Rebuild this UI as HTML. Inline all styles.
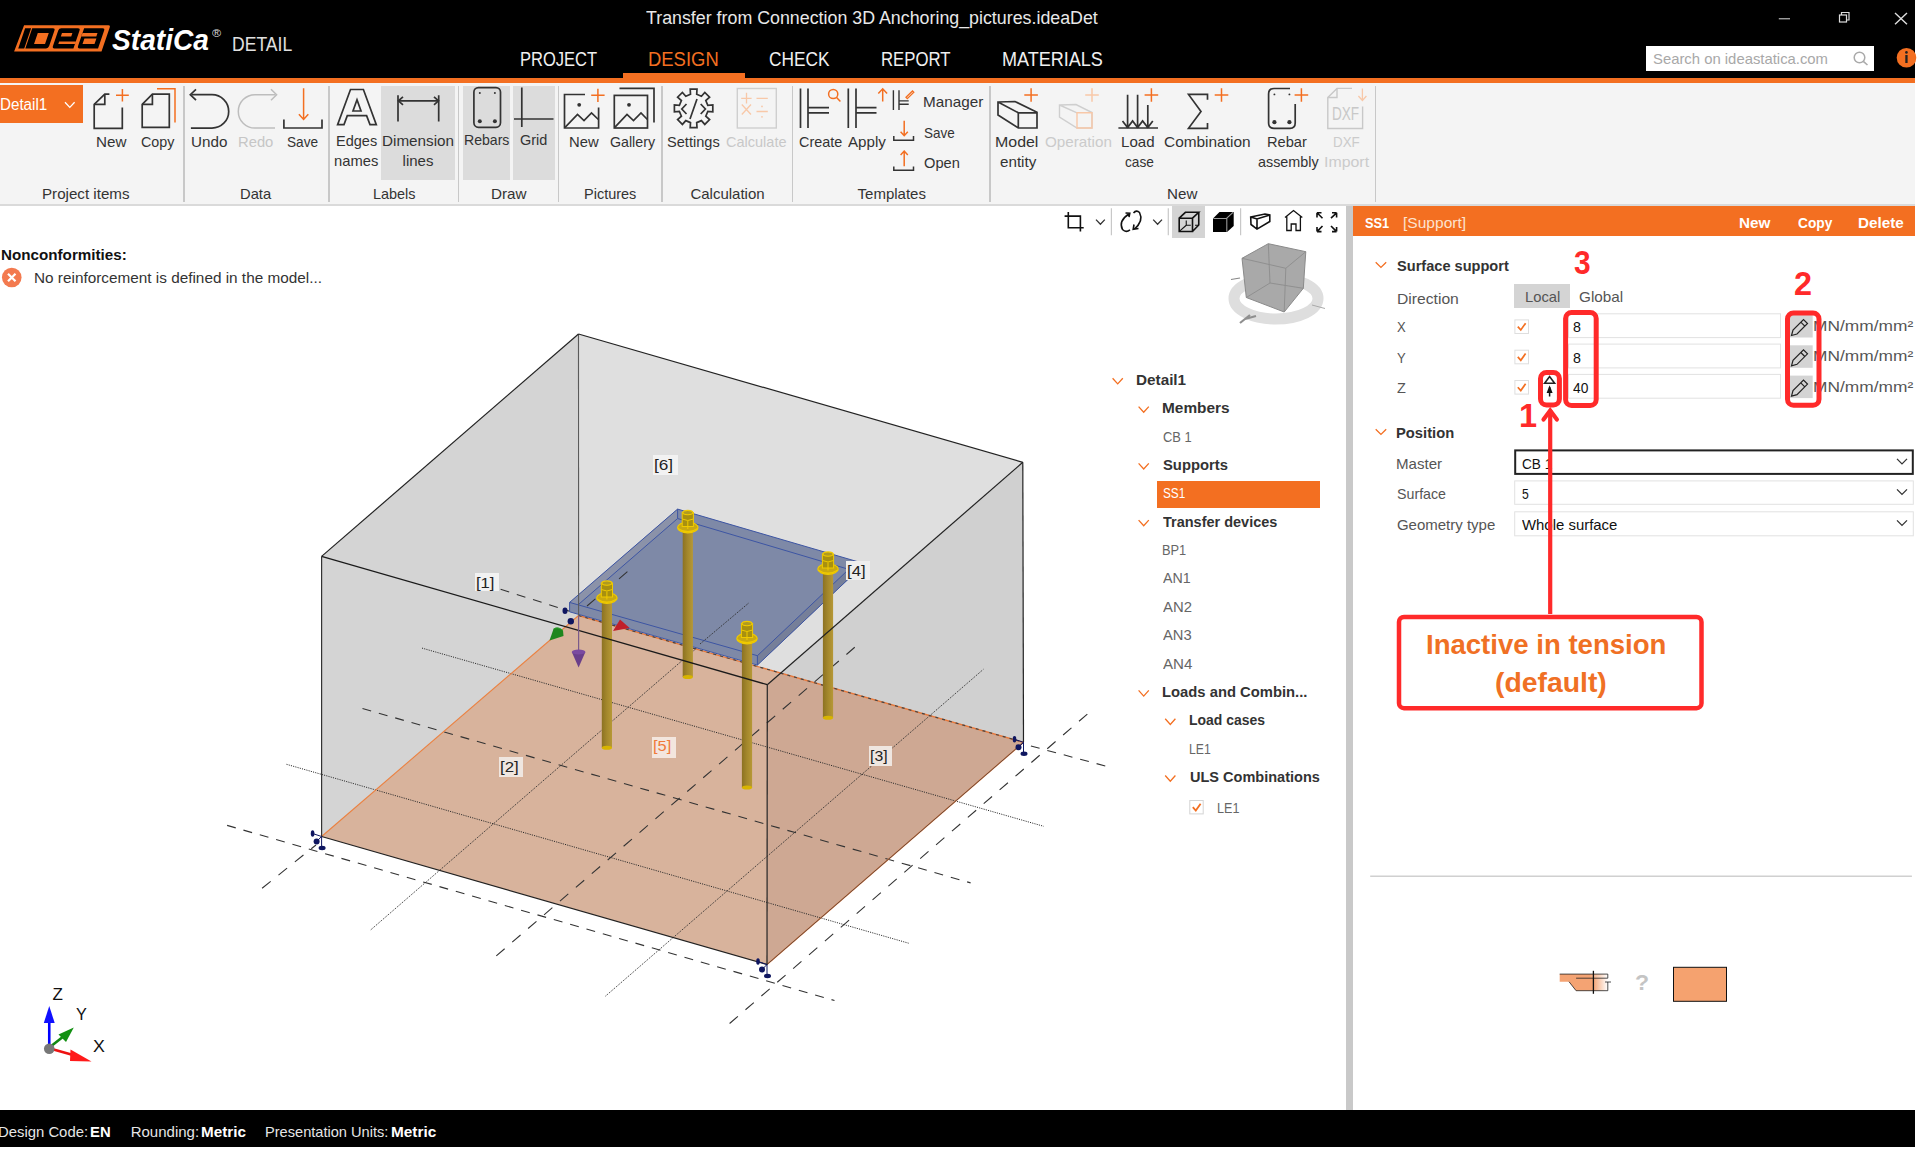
<!DOCTYPE html>
<html><head><meta charset="utf-8"><style>
html,body{margin:0;padding:0;width:1920px;height:1150px;overflow:hidden;background:#fff;font-family:"Liberation Sans", sans-serif;}
#app{position:relative;width:1920px;height:1150px;overflow:hidden;}
</style></head><body><div id="app">
<div style="position:absolute;left:0px;top:0px;width:1915px;height:78px;background:#000;"></div><div style="position:absolute;left:0px;top:78px;width:1915px;height:5px;background:#f36f21;"></div><div style="position:absolute;left:1915px;top:0px;width:5px;height:1150px;background:#fff;"></div><div style="position:absolute;left:623px;top:73px;width:122px;height:5px;background:#f36f21;"></div><svg style="position:absolute;left:0px;top:0px;overflow:visible;" width="120" height="60" viewBox="0 0 120 60">
<g transform="matrix(1 0 -0.343 1 17.63 0)">
<path d="M15.1 25.2 H99.5 Q101.5 25.2 101.5 27.5 V51.4 H14.1 Z" fill="#f36f21"/>
<rect x="17.2" y="28.3" width="6" height="20.1" fill="#000"/>
<path d="M24.3 28.3 H45 Q47.3 28.3 47.3 30.6 V46 Q47.3 48.4 45 48.4 H24.3 Z M31.5 33.1 V44 H42.5 V33.1 Z" fill="#000" fill-rule="evenodd"/>
<path d="M53.4 28.3 H70 Q72.4 28.3 72.4 30.6 V48.4 H53.4 Q51.1 48.4 51.1 46 V30.6 Q51.1 28.3 53.4 28.3 Z M55.7 33.1 V36.4 H66.1 V33.1 Z M55.8 41.6 V44.1 H72.5 V41.6 Z" fill="#000" fill-rule="evenodd"/>
<path d="M76.2 28.3 H94.7 Q97 28.3 97 30.6 V48.4 H78.5 Q76.2 48.4 76.2 46 Z M76 33.1 V36.4 H91.2 V33.1 Z M80 38.5 V44.1 H92 V38.5 Z" fill="#000" fill-rule="evenodd"/>
</g>
</svg><svg style="position:absolute;left:1770px;top:5px;overflow:visible;" width="145" height="30" viewBox="0 0 145 30">
<line x1="8.8" y1="13.8" x2="20" y2="13.8" stroke="#ddd" stroke-width="1"/>
<rect x="69.5" y="10" width="7" height="7" fill="none" stroke="#ddd" stroke-width="1.2"/>
<path d="M71.5 10 V7.5 H79 V15 H76.5" fill="none" stroke="#ddd" stroke-width="1.2"/>
<path d="M125 8 L137 19.2 M137 8 L125 19.2" stroke="#ddd" stroke-width="1.4"/>
</svg><div style="position:absolute;left:1645.6px;top:45.6px;width:228.80000000000018px;height:24.999999999999993px;background:#fff;"></div><svg style="position:absolute;left:1850px;top:50px;overflow:visible;" width="22" height="18" viewBox="0 0 22 18"><circle cx="9.5" cy="7.5" r="5.3" fill="none" stroke="#aaa" stroke-width="1.5"/><path d="M13.3 11.3 L17.5 15" stroke="#aaa" stroke-width="1.6"/></svg><svg style="position:absolute;left:1895px;top:46px;overflow:visible;" width="22" height="24" viewBox="0 0 22 24"><circle cx="11.5" cy="11.8" r="9.8" fill="#f36f21"/><rect x="10.3" y="9" width="2.3" height="8" fill="#222"/><circle cx="11.45" cy="6.4" r="1.3" fill="#222"/></svg><div style="position:absolute;left:0px;top:83px;width:1915px;height:121px;background:#f4f4f4;"></div><div style="position:absolute;left:0px;top:204px;width:1915px;height:2px;background:#dadada;"></div><div style="position:absolute;left:381px;top:86px;width:74px;height:94px;background:#dcdcdc;"></div><div style="position:absolute;left:463px;top:86px;width:47.30000000000001px;height:94px;background:#dcdcdc;"></div><div style="position:absolute;left:512.5px;top:86px;width:42.200000000000045px;height:94px;background:#dcdcdc;"></div><div style="position:absolute;left:183.25px;top:86px;width:1.5px;height:115.5px;background:#c8c8c8;"></div><div style="position:absolute;left:328.05px;top:86px;width:1.5px;height:115.5px;background:#c8c8c8;"></div><div style="position:absolute;left:457.75px;top:86px;width:1.5px;height:115.5px;background:#c8c8c8;"></div><div style="position:absolute;left:557.95px;top:86px;width:1.5px;height:115.5px;background:#c8c8c8;"></div><div style="position:absolute;left:661.25px;top:86px;width:1.5px;height:115.5px;background:#c8c8c8;"></div><div style="position:absolute;left:791.65px;top:86px;width:1.5px;height:115.5px;background:#c8c8c8;"></div><div style="position:absolute;left:989.25px;top:86px;width:1.5px;height:115.5px;background:#c8c8c8;"></div><div style="position:absolute;left:1374.85px;top:86px;width:1.5px;height:115.5px;background:#c8c8c8;"></div><div style="position:absolute;left:0px;top:85px;width:83px;height:38px;background:#f36f21;"></div><svg style="position:absolute;left:60px;top:95px;overflow:visible;" width="20" height="20" viewBox="0 0 20 20"><path d="M5 7.2 L9.8 12.4 L14.6 7.2" fill="none" stroke="#fff" stroke-width="1.3"/></svg><svg style="position:absolute;left:0px;top:0px;overflow:visible;" width="200" height="140" viewBox="0 0 200 140">
<path d="M109.4 94.2 H104.8 L94.2 104.3 V128.3 H122.3 V107.5" fill="none" stroke="#333" stroke-width="1.7" stroke-linejoin="miter"/>
<path d="M94.2 104.3 H104.8 V94.2" fill="none" stroke="#333" stroke-width="1.7" stroke-linejoin="miter"/>
<path d="M122.4 89 V101.6 M116 95.3 H128.8" fill="none" stroke="#f36f21" stroke-width="1.5"/>
<path d="M152.4 94.2 H169.3 V127.4 H142.2 V104.3 Z" fill="none" stroke="#333" stroke-width="1.7" stroke-linejoin="miter"/>
<path d="M142.2 104.3 H152.4 V94.2" fill="none" stroke="#333" stroke-width="1.7" stroke-linejoin="miter"/>
<path d="M157 88.7 H175 V122.4" fill="none" stroke="#f36f21" stroke-width="1.5"/>
</svg><svg style="position:absolute;left:0px;top:0px;overflow:visible;" width="340" height="140" viewBox="0 0 340 140">
<path d="M191.5 94.7 H212 A16.7 16.7 0 0 1 212 128.1 H190.9" fill="none" stroke="#333" stroke-width="1.7" stroke-linejoin="miter"/>
<path d="M196 89.3 L190.3 94.7 L196 100.2" fill="none" stroke="#333" stroke-width="1.7" stroke-linejoin="miter"/>
<path d="M275.5 94.7 H255 A16.7 16.7 0 0 0 255 128.1 H275" fill="none" stroke="#bdbdbd" stroke-width="1.5"/>
<path d="M271 89.3 L276.6 94.7 L271 100.2" fill="none" stroke="#bdbdbd" stroke-width="1.5"/>
<path d="M303.6 88.3 V119.3 M298.9 114.3 L303.6 119.5 L308.3 114.3" fill="none" stroke="#f36f21" stroke-width="1.5"/>
<path d="M283.9 119.6 V128 H322 V119.6" fill="none" stroke="#333" stroke-width="1.7" stroke-linejoin="miter"/>
</svg><svg style="position:absolute;left:0px;top:0px;overflow:visible;" width="460" height="140" viewBox="0 0 460 140">
<path d="M350.5 89.5 H363.4 L376.3 124.6 H370 L366.6 115.6 H347.3 L344 124.6 H337.6 Z" fill="none" stroke="#333" stroke-width="1.7" stroke-linejoin="miter"/>
<path d="M353 111 H361 L357 99.8 Z" fill="none" stroke="#333" stroke-width="1.7" stroke-linejoin="miter"/>
<path d="M398 95.2 V121.5 M438.7 95.2 V121.5 M398.3 100.8 H438.4" fill="none" stroke="#333" stroke-width="1.7" stroke-linejoin="miter"/>
<path d="M403 96.8 L398.4 100.8 L403 104.8 M434 96.8 L438.5 100.8 L434 104.8" fill="none" stroke="#333" stroke-width="1.7" stroke-linejoin="miter"/>
</svg><svg style="position:absolute;left:0px;top:0px;overflow:visible;" width="560" height="140" viewBox="0 0 560 140">
<rect x="473.9" y="87.6" width="26.6" height="39.7" rx="4.5" fill="none" stroke="#333" stroke-width="1.7" stroke-linejoin="miter"/>
<circle cx="479.8" cy="92.9" r="1" fill="#333"/><circle cx="494.9" cy="92.9" r="1" fill="#333"/>
<circle cx="479.8" cy="121.2" r="2" fill="#333"/><circle cx="494.9" cy="121.2" r="2" fill="#333"/>
<path d="M521.8 87.5 V127 M514 119 H553.5" fill="none" stroke="#333" stroke-width="1.7" stroke-linejoin="miter"/>
</svg><svg style="position:absolute;left:0px;top:0px;overflow:visible;" width="670" height="140" viewBox="0 0 670 140">
<path d="M585 94.5 H564.5 V128 H598.6 V107.5" fill="none" stroke="#333" stroke-width="1.7" stroke-linejoin="miter"/>
<path d="M564.8 127.6 L577.5 114.5 L584 120.5 L591.5 113 L598.4 119.5" fill="none" stroke="#333" stroke-width="1.7" stroke-linejoin="miter"/>
<circle cx="579.2" cy="104.8" r="1.9" fill="#333"/>
<path d="M597.9 88.7 V102 M591.2 95.3 H604.6" fill="none" stroke="#f36f21" stroke-width="1.5"/>
<rect x="614.3" y="95.4" width="33.2" height="32.6" fill="none" stroke="#333" stroke-width="1.7" stroke-linejoin="miter"/>
<path d="M619.5 88.3 H654 V122.5" fill="none" stroke="#333" stroke-width="1.7" stroke-linejoin="miter"/>
<path d="M614.5 127.6 L627 114.5 L633.5 120.5 L641 113 L647.4 119.5" fill="none" stroke="#333" stroke-width="1.7" stroke-linejoin="miter"/>
<circle cx="629" cy="104.8" r="1.9" fill="#333"/>
</svg><svg style="position:absolute;left:0px;top:0px;overflow:visible;" width="800" height="140" viewBox="0 0 800 140">
<path d="M712.8 105.0 L712.8 111.8 L707.8 111.5 L705.8 116.2 L709.6 119.6 L704.8 124.4 L701.4 120.6 L696.7 122.6 L697.0 127.6 L690.2 127.6 L690.5 122.6 L685.8 120.6 L682.4 124.4 L677.6 119.6 L681.4 116.2 L679.4 111.5 L674.4 111.8 L674.4 105.0 L679.4 105.3 L681.4 100.6 L677.6 97.2 L682.4 92.4 L685.8 96.2 L690.5 94.2 L690.2 89.2 L697.0 89.2 L696.7 94.2 L701.4 96.2 L704.8 92.4 L709.6 97.2 L705.8 100.6 L707.8 105.3 Z" fill="none" stroke="#333" stroke-width="1.7" stroke-linejoin="miter"/>
<path d="M686.5 104 L681.8 109 L686.5 114 M700.7 104 L705.4 109 L700.7 114 M697 99 L690 119" fill="none" stroke="#333" stroke-width="1.7" stroke-linejoin="miter"/>
<rect x="737.3" y="88.5" width="39" height="39.5" fill="none" stroke="#cfcfcf" stroke-width="1.4"/>
<path d="M746.5 92.8 V103.5 M741.2 98.3 H751.6 M756.5 98.3 H767.8 M741.8 104.5 L751 114.5 M751 104.5 L741.8 114.5 M756.5 111.5 H767.8" fill="none" stroke="#f8c8a8" stroke-width="1.3"/>
<circle cx="762" cy="106.4" r="0.9" fill="#f8c8a8"/><circle cx="762" cy="116.8" r="0.9" fill="#f8c8a8"/>
</svg><svg style="position:absolute;left:0px;top:0px;overflow:visible;" width="1000" height="180" viewBox="0 0 1000 180">
<path d="M800.5 88.5 V128 M808 88.5 V128 M808 107.7 H829 M808 112.8 H829" fill="none" stroke="#333" stroke-width="1.7" stroke-linejoin="miter"/>
<circle cx="833.2" cy="94" r="4.6" fill="none" stroke="#f36f21" stroke-width="1.5"/><path d="M836.6 97.5 L840.4 101.5" fill="none" stroke="#f36f21" stroke-width="1.5"/>
<path d="M848.3 88.5 V128 M856 88.5 V128 M856 107.7 H876.5 M856 112.8 H876.5" fill="none" stroke="#333" stroke-width="1.7" stroke-linejoin="miter"/>
<path d="M882.7 89 V101.5 M878.3 93.5 L882.7 88.8 L887.1 93.5" fill="none" stroke="#f36f21" stroke-width="1.5"/>
<path d="M893.4 90.2 V110 M899 90.2 V110 M899 100.9 H908.7 M899 104.3 H908.7" fill="none" stroke="#333" stroke-width="1.4"/>
<path d="M906 97.3 L912.5 91 L913.8 92.3 L907.3 98.6 Z" fill="none" stroke="#f36f21" stroke-width="1.3"/>
<path d="M904.2 120.7 V135.5 M900.6 131.8 L904.2 135.7 L907.8 131.8" fill="none" stroke="#f36f21" stroke-width="1.5"/>
<path d="M893.8 136 V140.3 H913.5 V136" fill="none" stroke="#333" stroke-width="1.5"/>
<path d="M904.2 151.2 V166.3 M900.6 155 L904.2 151.1 L907.8 155" fill="none" stroke="#f36f21" stroke-width="1.5"/>
<path d="M893.8 166.5 V170.3 H913.5 V166.5" fill="none" stroke="#333" stroke-width="1.5"/>
</svg><svg style="position:absolute;left:0px;top:0px;overflow:visible;" width="1380" height="180" viewBox="0 0 1380 180">
<path d="M998 102 L1015 101.5 L1037 112.2 V128 H1018.3 L998 115 Z M998 102 L1018.3 112.8 H1037 M1018.3 112.8 V128" fill="none" stroke="#333" stroke-width="1.7" stroke-linejoin="miter"/>
<path d="M1031.1 88.2 V101.8 M1024.3 95 H1037.9" fill="none" stroke="#f36f21" stroke-width="1.5"/>
<path d="M1059.5 105 L1076 104.5 L1092 112.5 V128 H1077 L1059.5 117 Z M1059.5 105 L1077 112.8" fill="none" stroke="#cfcfcf" stroke-width="1.4"/>
<path d="M1077 112.8 H1092 V128 H1077 Z" fill="none" stroke="#f8c8a8" stroke-width="1.4"/>
<path d="M1092 88.2 V101.8 M1085.2 95 H1098.8" fill="none" stroke="#f8c8a8" stroke-width="1.5"/>
<path d="M1127.6 94.7 V127.5 M1137.6 94.7 V127.5 M1147.8 104.9 V127.5 M1118.4 128 H1158 M1122.5 121 L1127.6 127.5 L1132.6 121 L1137.6 127.5 L1142.6 121 L1147.8 127.5 L1152.8 121" fill="none" stroke="#333" stroke-width="1.7" stroke-linejoin="miter"/>
<path d="M1151.4 88.2 V101.8 M1144.6 95 H1158.2" fill="none" stroke="#f36f21" stroke-width="1.5"/>
<path d="M1207.5 99.8 V94.4 H1188.5 L1201 111.5 L1188.5 128.3 H1207.5 V123" fill="none" stroke="#333" stroke-width="1.7" stroke-linejoin="miter"/>
<path d="M1221.5 88.2 V101.8 M1214.7 95 H1228.3" fill="none" stroke="#f36f21" stroke-width="1.5"/>
<path d="M1290 88.5 H1274 Q1268.6 88.5 1268.6 94 V123 Q1268.6 128.3 1274 128.3 H1290 Q1295.2 128.3 1295.2 123 V104" fill="none" stroke="#333" stroke-width="1.7" stroke-linejoin="miter"/>
<circle cx="1274.4" cy="94.4" r="0.95" fill="#333"/><circle cx="1289.4" cy="94.4" r="0.95" fill="#333"/>
<circle cx="1274.4" cy="122.2" r="2.1" fill="#333"/><circle cx="1289.4" cy="122.2" r="2.1" fill="#333"/>
<path d="M1301.4 88.2 V101.8 M1294.6 95 H1308.2" fill="none" stroke="#f36f21" stroke-width="1.5"/>
<path d="M1352 88.4 H1337 L1327.8 97.5 V128.5 H1362.6 V106.5" fill="none" stroke="#c8c8c8" stroke-width="1.4"/>
<path d="M1337 88.4 V97.5 H1327.8" fill="none" stroke="#c8c8c8" stroke-width="1.4"/>
<path d="M1362.4 88.5 V100 M1358.4 96 L1362.4 100.5 L1366.4 96" fill="none" stroke="#f8c8a8" stroke-width="1.3"/>
</svg><div style="position:absolute;left:0px;top:206px;width:1346px;height:904px;background:#fff;"></div><div style="position:absolute;left:1346px;top:206px;width:7px;height:904px;background:#c9c9c9;"></div><div style="position:absolute;left:1353px;top:236.5px;width:562px;height:873.5px;background:#fff;"></div><div style="position:absolute;left:0px;top:1110px;width:1915px;height:37px;background:#000;"></div><svg style="position:absolute;left:0px;top:265px;overflow:visible;" width="25" height="25" viewBox="0 0 25 25"><circle cx="11.75" cy="12.5" r="9.8" fill="#f37a4f"/><path d="M8 8.7 L15.5 16.3 M15.5 8.7 L8 16.3" stroke="#fff" stroke-width="2.2"/></svg><div style="position:absolute;left:1171.7px;top:206px;width:33.700000000000045px;height:31.69999999999999px;background:#d4d4d4;"></div><svg style="position:absolute;left:1050px;top:200px;overflow:visible;" width="300" height="45" viewBox="0 0 300 45">
<path d="M1068.3 211.9 V227.7 H1083.7 M1064.6 216.1 H1080.4 V231.5" fill="none" stroke="#111" stroke-width="1.6" transform="translate(-1050,-200)"/>
<path d="M1096 219.6 L1100.4 224.2 L1104.8 219.6" fill="none" stroke="#333" stroke-width="1.3" transform="translate(-1050,-200)"/>
<path d="M1111.4 208.2 V235.2" stroke="#c8c8c8" stroke-width="1.2" transform="translate(-1050,-200)"/>
<path d="M1129.5 213.5 Q1118 221 1122.5 229.5 Q1126 233 1130 229.8 M1125.5 213 L1129.8 213.3 L1129 217.2 M1134 229.5 Q1144 221 1139.5 212.5 Q1136.5 209.5 1133.5 213 M1138.5 228.5 L1133.2 229.3 L1134 224.5" fill="none" stroke="#111" stroke-width="1.6" transform="translate(-1050,-200)"/>
<path d="M1153.2 219.6 L1157.6 224.2 L1162 219.6" fill="none" stroke="#333" stroke-width="1.3" transform="translate(-1050,-200)"/>
<path d="M1168.3 208.2 V235.2" stroke="#c8c8c8" stroke-width="1.2" transform="translate(-1050,-200)"/>
<path d="M1179.2 218.2 H1192.5 V231.5 H1179.2 Z M1179.2 218.2 L1185.4 212.3 H1198.75 L1192.5 218.2 M1198.75 212.3 V225 L1192.5 231.5" fill="none" stroke="#111" stroke-width="1.6" transform="translate(-1050,-200)"/><path d="M1186.25 220.5 V225.25 H1190.8 M1179.6 231.2 L1186.25 225.25 M1195 225.25 H1198.5" fill="none" stroke="#111" stroke-width="1.1" transform="translate(-1050,-200)"/>
<path d="M1213 218.5 L1219.5 212 H1233.7 V226 L1227 232 H1213 Z" fill="#000" transform="translate(-1050,-200)"/>
<path d="M1213.5 218.5 H1226.5 L1233 212.3 M1226.8 218.5 V231.8" stroke="#999" stroke-width="1.1" fill="none" transform="translate(-1050,-200)"/>
<path d="M1240.6 208.2 V235.2" stroke="#c8c8c8" stroke-width="1.2" transform="translate(-1050,-200)"/>
<path d="M1250.7 217 L1265 214 L1269.8 215 V221.5 L1257 229.1 L1251 224.5 Z M1250.7 217 L1257 219 L1269.8 215 M1257 219 V229.1" fill="none" stroke="#111" stroke-width="1.6" transform="translate(-1050,-200)"/>
<path d="M1285 217.5 L1293.5 210.5 L1302.3 217.5 M1286.8 216.2 V230.5 H1291.2 V224 H1296 V230.5 H1300.4 V216.2" fill="none" stroke="#111" stroke-width="1.3" transform="translate(-1050,-200)"/>
<path d="M1317 212.8 L1322.5 218.2 M1317 212.8 V217.5 M1317 212.8 H1321.5 M1336.6 212.8 L1331 218.2 M1336.6 212.8 V217.5 M1336.6 212.8 H1332 M1317 231.6 L1322.5 226 M1317 231.6 V227 M1317 231.6 H1321.5 M1336.6 231.6 L1331 226 M1336.6 231.6 V227 M1336.6 231.6 H1332" fill="none" stroke="#111" stroke-width="1.6" transform="translate(-1050,-200)"/>
</svg><svg style="position:absolute;left:1220px;top:235px;overflow:visible;" width="120" height="95" viewBox="0 0 120 95">
<g transform="translate(-1220,-235)">
<ellipse cx="1276" cy="298.5" rx="42" ry="20.5" fill="none" stroke="#dedede" stroke-width="11"/>
<path d="M1242 258.3 L1268.3 243.7 L1305.8 251.7 L1303.3 288.3 L1284.2 312 L1246.3 297.5 Z" fill="#a9a9a9"/>
<path d="M1242 258.3 L1285.8 268.3 L1305.8 251.7 M1285.8 268.3 L1284.2 312 M1268.3 243.7 L1270 283 L1246.3 297.5 M1270 283 L1303.3 288.3" fill="none" stroke="#8c8c8c" stroke-width="0.9"/>
<path d="M1242 258.3 L1268.3 243.7 L1305.8 251.7 L1303.3 288.3 L1284.2 312 L1246.3 297.5 Z" fill="none" stroke="#8a8a8a" stroke-width="1"/>
<path d="M1231 279.5 L1240 278" stroke="#888" stroke-width="1.2"/>
<path d="M1312 305 L1325 308.5" stroke="#aaa" stroke-width="1"/>
<path d="M1240 323 L1250 315 M1245 319 L1256 316" stroke="#8f8f8f" stroke-width="2.2"/>
</g></svg><svg style="position:absolute;left:30px;top:980px;overflow:visible;" width="80" height="90" viewBox="0 0 80 90">
<g transform="translate(-30,-980)">
<path d="M49.25 1047 V1020" stroke="#0000ff" stroke-width="2.6"/>
<path d="M43.8 1023 L49.25 1006 L54.7 1023 Z" fill="#1010ff"/>
<path d="M50 1047 L64 1036" stroke="#118811" stroke-width="2.6"/>
<path d="M58.5 1034.5 L73.8 1027.5 L66 1042 Z" fill="#129012"/>
<path d="M50 1048.5 L73 1055" stroke="#ee1111" stroke-width="2.6"/>
<path d="M70.5 1049.5 L91.5 1061.5 L70 1061 Z" fill="#ff1a1a"/>
<circle cx="49.25" cy="1048.75" r="5.3" fill="#777"/>
</g></svg><div style="position:absolute;left:1156.75px;top:481px;width:163.6500000000001px;height:26.899999999999977px;background:#f36f21;"></div><svg style="position:absolute;left:0px;top:0px;overflow:visible;" width="1350" height="830" viewBox="0 0 1350 830"><path d="M1112.6 378.2 L1117.6999999999998 383.9 L1122.8 378.2" fill="none" stroke="#f36f21" stroke-width="1.3"/><path d="M1138.6 406.58 L1143.6999999999998 412.28 L1148.8 406.58" fill="none" stroke="#f36f21" stroke-width="1.3"/><path d="M1138.6 463.34 L1143.6999999999998 469.03999999999996 L1148.8 463.34" fill="none" stroke="#f36f21" stroke-width="1.3"/><path d="M1138.6 520.1 L1143.6999999999998 525.8000000000001 L1148.8 520.1" fill="none" stroke="#f36f21" stroke-width="1.3"/><path d="M1138.6 690.3800000000001 L1143.6999999999998 696.0800000000002 L1148.8 690.3800000000001" fill="none" stroke="#f36f21" stroke-width="1.3"/><path d="M1165.1999999999998 718.76 L1170.2999999999997 724.46 L1175.3999999999999 718.76" fill="none" stroke="#f36f21" stroke-width="1.3"/><path d="M1165.1999999999998 775.52 L1170.2999999999997 781.22 L1175.3999999999999 775.52" fill="none" stroke="#f36f21" stroke-width="1.3"/><rect x="1189.8" y="800.5" width="13.4" height="13.4" fill="#fff" stroke="#d4d4d4" stroke-width="1"/><path d="M1192.8 807.2 L1195.8 810.6 L1200.6 803.8" fill="none" stroke="#f36f21" stroke-width="1.8"/></svg><div style="position:absolute;left:1353px;top:205.6px;width:561.8px;height:30.900000000000006px;background:#f36f21;"></div><div style="position:absolute;left:1514.4px;top:283.8px;width:56.09999999999991px;height:24.0px;background:#d4d4d4;"></div><svg style="position:absolute;left:0px;top:0px;overflow:visible;" width="1920" height="1150" viewBox="0 0 1920 1150"><path d="M1375.7 262.2 L1380.95 267.4 L1386.2 262.2" fill="none" stroke="#f36f21" stroke-width="1.3"/><rect x="1514.9" y="319.9" width="13.6" height="13.6" fill="#fff" stroke="#dedede" stroke-width="1"/><path d="M1517.8 326.6 L1520.8 330.0 L1525.6 323.2" fill="none" stroke="#f36f21" stroke-width="1.7"/><rect x="1568.5" y="313.8" width="212" height="23.8" fill="#fff" stroke="#e2e2e2" stroke-width="1"/><rect x="1789.4" y="315.0" width="23.3" height="22.5" fill="#d4d4d4"/><path d="M1791.5 335.5 L1793 330.0 L1803.5 319.5 L1807.5 323.5 L1797 334.0 Z M1800.8 322.2 L1804.8 326.2" fill="none" stroke="#222" stroke-width="1.2"/><rect x="1514.9" y="350.2" width="13.6" height="13.6" fill="#fff" stroke="#dedede" stroke-width="1"/><path d="M1517.8 356.90000000000003 L1520.8 360.3 L1525.6 353.5" fill="none" stroke="#f36f21" stroke-width="1.7"/><rect x="1568.5" y="344.1" width="212" height="23.8" fill="#fff" stroke="#e2e2e2" stroke-width="1"/><rect x="1789.4" y="345.3" width="23.3" height="22.5" fill="#d4d4d4"/><path d="M1791.5 365.8 L1793 360.3 L1803.5 349.8 L1807.5 353.8 L1797 364.3 Z M1800.8 352.5 L1804.8 356.5" fill="none" stroke="#222" stroke-width="1.2"/><rect x="1514.9" y="380.5" width="13.6" height="13.6" fill="#fff" stroke="#dedede" stroke-width="1"/><path d="M1517.8 387.20000000000005 L1520.8 390.6 L1525.6 383.8" fill="none" stroke="#f36f21" stroke-width="1.7"/><rect x="1568.5" y="374.40000000000003" width="212" height="23.8" fill="#fff" stroke="#e2e2e2" stroke-width="1"/><rect x="1789.4" y="375.6" width="23.3" height="22.5" fill="#d4d4d4"/><path d="M1791.5 396.1 L1793 390.6 L1803.5 380.1 L1807.5 384.1 L1797 394.6 Z M1800.8 382.8 L1804.8 386.8" fill="none" stroke="#222" stroke-width="1.2"/><path d="M1544.6 383.2 L1549.6 376.6 L1554.6 383.2 Z" fill="none" stroke="#222" stroke-width="1.6"/><path d="M1549.6 387 V396.5" stroke="#111" stroke-width="1.5"/><path d="M1546.6 393 L1549.6 385.2 L1552.6 393 Z" fill="#111"/><path d="M1375.7 429.2 L1380.95 434.4 L1386.2 429.2" fill="none" stroke="#f36f21" stroke-width="1.3"/><rect x="1515.2" y="450.4" width="397.6" height="23.5" fill="#fff" stroke="#222" stroke-width="2"/><rect x="1514.7" y="480.9" width="398.6" height="23.4" fill="#fff" stroke="#e2e2e2" stroke-width="1"/><rect x="1514.7" y="511.8" width="398.6" height="24" fill="#fff" stroke="#e2e2e2" stroke-width="1"/><path d="M1897 458.9 L1902 463.9 L1907 458.9" fill="none" stroke="#333" stroke-width="1.3"/><path d="M1897 489.4 L1902 494.4 L1907 489.4" fill="none" stroke="#333" stroke-width="1.3"/><path d="M1897 520.4 L1902 525.4 L1907 520.4" fill="none" stroke="#333" stroke-width="1.3"/><path d="M1370.2 876.25 H1911.9" stroke="#d0d0d0" stroke-width="1.5"/><defs><linearGradient id="fade" x1="0" x2="1" y1="0" y2="0"><stop offset="0" stop-color="#f4a373"/><stop offset="0.62" stop-color="#f4a373"/><stop offset="1" stop-color="#ffffff"/></linearGradient></defs><path d="M1559.7 974.1 H1607.8 V981.7 H1559.7 Z" fill="url(#fade)"/><path d="M1569 981.7 L1576.1 978.2 H1607.8 V990.7 H1576.1 Z" fill="url(#fade)"/><path d="M1559.7 974.1 H1607.8 V978.2 M1576.1 978.2 H1607.8 M1607.8 982 V990.7 H1576.1 L1569 981.7 M1605 982 H1611" fill="none" stroke="#222" stroke-width="0.8"/><path d="M1593.4 970.8 V993.8" stroke="#111" stroke-width="1.3"/><rect x="1673.5" y="967.3" width="53" height="34" fill="#f5a26f" stroke="#111" stroke-width="1"/></svg><svg style="position:absolute;left:0px;top:0px;overflow:visible;" width="1346" height="1110" viewBox="0 0 1346 1110"><polygon points="578.5,334.0 321.6,556.4 321.6,836.5 578.6,615.5" fill="#d4d4d4"/><polygon points="578.5,334.0 1022.8,462.3 780.6,673.2 578.6,615.5" fill="#dfdfdf"/><polygon points="1022.8,462.3 1023.5,742.3 780.6,673.2" fill="#d0d0d0"/><polygon points="321.6,836.5 578.6,615.5 780.6,673.2 767.3,684.7 767.0,964.5" fill="#d8b39c"/><polygon points="767.3,684.7 780.6,673.2 1023.5,742.3 767.0,964.5" fill="#cea893"/><line x1="227.1" y1="825.4" x2="834.5" y2="1000.5" stroke="#333" stroke-width="1.1" stroke-dasharray="9,8" /><line x1="262.1" y1="888.2" x2="316.0" y2="845.0" stroke="#333" stroke-width="1.1" stroke-dasharray="11,10" /><line x1="362.5" y1="708.5" x2="970.6" y2="882.9" stroke="#333" stroke-width="1.1" stroke-dasharray="9,8" /><line x1="496.3" y1="955.9" x2="861.0" y2="641.9" stroke="#333" stroke-width="1.1" stroke-dasharray="11,10" /><line x1="729.6" y1="1023.5" x2="1094.8" y2="707.6" stroke="#333" stroke-width="1.1" stroke-dasharray="11,10" /><line x1="1030.9" y1="746.0" x2="1105.7" y2="766.1" stroke="#333" stroke-width="1.1" stroke-dasharray="9,8" /><line x1="500.6" y1="589.3" x2="569.5" y2="611.2" stroke="#333" stroke-width="1.1" stroke-dasharray="9,8" /><line x1="286.5" y1="764.3" x2="908.6" y2="943.2" stroke="#2a2a2a" stroke-width="1" stroke-dasharray="1.1,1.2" /><line x1="370.8" y1="929.8" x2="748.4" y2="603.3" stroke="#2a2a2a" stroke-width="1" stroke-dasharray="1.1,1.2" /><line x1="422.0" y1="648.1" x2="1043.7" y2="826.3" stroke="#2a2a2a" stroke-width="1" stroke-dasharray="1.1,1.2" /><line x1="605.5" y1="996.1" x2="983.4" y2="669.3" stroke="#2a2a2a" stroke-width="1" stroke-dasharray="1.1,1.2" /><line x1="321.6" y1="836.5" x2="578.6" y2="615.5" stroke="#ea8040" stroke-width="1.1" /><line x1="578.6" y1="615.5" x2="1023.5" y2="742.3" stroke="#e8783a" stroke-width="1.3" /><line x1="578.6" y1="615.5" x2="1023.5" y2="742.3" stroke="#444" stroke-width="1.2" stroke-dasharray="3,4" /><line x1="767.0" y1="964.5" x2="1023.5" y2="742.3" stroke="#e8783a" stroke-width="1.3" /><line x1="767.0" y1="964.5" x2="1023.5" y2="742.3" stroke="#444" stroke-width="0.8" /><line x1="321.6" y1="836.5" x2="767.0" y2="964.5" stroke="#222" stroke-width="1.3" /><polygon points="677.6,509.1 857.0,561.5 857.0,570.9 757.4,665.1 569.6,611.8 569.6,602.4" fill="#7e89a7"/><polygon points="569.6,602.4 677.6,509.1 677.6,518.5 578.1,604.8" fill="#8b92a9"/><polygon points="757.4,655.7 857.0,561.5 857.0,570.9 757.4,665.1" fill="#767f99"/><line x1="569.6" y1="602.4" x2="677.6" y2="509.1" stroke="#3d55a3" stroke-width="1" /><line x1="677.6" y1="509.1" x2="857.0" y2="561.5" stroke="#3d55a3" stroke-width="1" /><line x1="857.0" y1="561.5" x2="757.4" y2="655.7" stroke="#3d55a3" stroke-width="1" /><line x1="757.4" y1="655.7" x2="569.6" y2="602.4" stroke="#3d55a3" stroke-width="1" /><line x1="677.6" y1="518.5" x2="578.1" y2="604.8" stroke="#3d55a3" stroke-width="1" /><line x1="677.6" y1="518.5" x2="851.0" y2="570.0" stroke="#3d55a3" stroke-width="1" /><line x1="757.4" y1="655.7" x2="757.4" y2="665.1" stroke="#3d55a3" stroke-width="1" /><line x1="569.6" y1="602.4" x2="569.6" y2="611.8" stroke="#3d55a3" stroke-width="1" /><line x1="757.4" y1="665.1" x2="569.6" y2="611.8" stroke="#3d55a3" stroke-width="1" /><line x1="757.4" y1="665.1" x2="857.0" y2="570.9" stroke="#3d55a3" stroke-width="1" /><line x1="857.0" y1="561.5" x2="857.0" y2="570.9" stroke="#3d55a3" stroke-width="1" /><line x1="677.6" y1="509.1" x2="677.6" y2="518.5" stroke="#3d55a3" stroke-width="1" /><line x1="587.0" y1="606.0" x2="630.0" y2="569.5" stroke="#333" stroke-width="1.1" stroke-dasharray="11,10" /><line x1="700.0" y1="644.0" x2="748.4" y2="603.3" stroke="#2a2a2a" stroke-width="1" stroke-dasharray="1.1,1.2" /><defs><linearGradient id="rod" x1="0" x2="1" y1="0" y2="0">
<stop offset="0" stop-color="#8c7222"/><stop offset="0.5" stop-color="#a4882c"/><stop offset="1" stop-color="#b69836"/></linearGradient>
<linearGradient id="nut" x1="0" x2="1" y1="0" y2="0">
<stop offset="0" stop-color="#d9b400"/><stop offset="0.5" stop-color="#f2cd10"/><stop offset="1" stop-color="#e0bc00"/></linearGradient></defs><rect x="601.8" y="602.5" width="10.2" height="145.2" fill="url(#rod)"/><ellipse cx="606.9" cy="747.7" rx="5.1" ry="2" fill="#d8b400"/><ellipse cx="606.9" cy="598.0" rx="10.2" ry="5.3" fill="#c9a912" stroke="#f0ca00" stroke-width="1.2"/><rect x="601.3" y="583.0" width="11.2" height="14" fill="#a8900f" stroke="#f0ca00" stroke-width="1"/><ellipse cx="606.9" cy="583.1" rx="5" ry="2.2" fill="#b09a20" stroke="#f0ca00" stroke-width="1.1"/><path d="M606.9 591.5 V599.5 M601.3 589.5 Q606.9 592.5 612.5 589.5" fill="none" stroke="#f0ca00" stroke-width="1"/><path d="M596.9 599.0 Q606.9 605.5 616.9 599.0" fill="none" stroke="#f0ca00" stroke-width="1.4"/><rect x="682.7" y="532.0" width="10.2" height="145.0" fill="url(#rod)"/><ellipse cx="687.8" cy="677.0" rx="5.1" ry="2" fill="#d8b400"/><ellipse cx="687.8" cy="527.5" rx="10.2" ry="5.3" fill="#c9a912" stroke="#f0ca00" stroke-width="1.2"/><rect x="682.2" y="512.5" width="11.2" height="14" fill="#a8900f" stroke="#f0ca00" stroke-width="1"/><ellipse cx="687.8" cy="512.6" rx="5" ry="2.2" fill="#b09a20" stroke="#f0ca00" stroke-width="1.1"/><path d="M687.8 521.0 V529.0 M682.2 519.0 Q687.8 522.0 693.4 519.0" fill="none" stroke="#f0ca00" stroke-width="1"/><path d="M677.8 528.5 Q687.8 535.0 697.8 528.5" fill="none" stroke="#f0ca00" stroke-width="1.4"/><rect x="741.9" y="643.0" width="10.2" height="144.5" fill="url(#rod)"/><ellipse cx="747.0" cy="787.5" rx="5.1" ry="2" fill="#d8b400"/><ellipse cx="747.0" cy="638.5" rx="10.2" ry="5.3" fill="#c9a912" stroke="#f0ca00" stroke-width="1.2"/><rect x="741.4" y="623.5" width="11.2" height="14" fill="#a8900f" stroke="#f0ca00" stroke-width="1"/><ellipse cx="747.0" cy="623.6" rx="5" ry="2.2" fill="#b09a20" stroke="#f0ca00" stroke-width="1.1"/><path d="M747.0 632.0 V640.0 M741.4 630.0 Q747.0 633.0 752.6 630.0" fill="none" stroke="#f0ca00" stroke-width="1"/><path d="M737.0 639.5 Q747.0 646.0 757.0 639.5" fill="none" stroke="#f0ca00" stroke-width="1.4"/><rect x="822.9" y="573.5" width="10.2" height="144.3" fill="url(#rod)"/><ellipse cx="828.0" cy="717.8" rx="5.1" ry="2" fill="#d8b400"/><ellipse cx="828.0" cy="569.0" rx="10.2" ry="5.3" fill="#c9a912" stroke="#f0ca00" stroke-width="1.2"/><rect x="822.4" y="554.0" width="11.2" height="14" fill="#a8900f" stroke="#f0ca00" stroke-width="1"/><ellipse cx="828.0" cy="554.1" rx="5" ry="2.2" fill="#b09a20" stroke="#f0ca00" stroke-width="1.1"/><path d="M828.0 562.5 V570.5 M822.4 560.5 Q828.0 563.5 833.6 560.5" fill="none" stroke="#f0ca00" stroke-width="1"/><path d="M818.0 570.0 Q828.0 576.5 838.0 570.0" fill="none" stroke="#f0ca00" stroke-width="1.4"/><line x1="578.5" y1="334.0" x2="578.6" y2="615.5" stroke="#5a5a5a" stroke-width="1.1" /><line x1="578.5" y1="334.0" x2="321.6" y2="556.4" stroke="#222" stroke-width="1.2" /><line x1="578.5" y1="334.0" x2="1022.8" y2="462.3" stroke="#222" stroke-width="1.2" /><line x1="767.3" y1="684.7" x2="1022.8" y2="462.3" stroke="#222" stroke-width="1.2" /><line x1="321.6" y1="556.4" x2="321.6" y2="836.5" stroke="#333" stroke-width="1.2" /><line x1="1022.8" y1="462.3" x2="1023.5" y2="742.3" stroke="#222" stroke-width="1.2" /><line x1="767.3" y1="684.7" x2="767.0" y2="964.5" stroke="#222" stroke-width="1.2" /><line x1="321.6" y1="556.4" x2="767.3" y2="684.7" stroke="#1a1a1a" stroke-width="1.3" /><circle cx="316.6" cy="841.5" r="3" fill="#0f1660"/><ellipse cx="322.1" cy="848.0" rx="3.5" ry="2.2" fill="#0f1660"/><ellipse cx="312.6" cy="833.5" rx="1.8" ry="3.3" fill="#0f1660"/><path d="M321.6 836.5 V847.5 M321.6 836.5 L316.6 841.5 M321.6 836.5 L312.6 833.5" stroke="#0f1660" stroke-width="1"/><circle cx="762.0" cy="969.5" r="3" fill="#0f1660"/><ellipse cx="767.5" cy="976.0" rx="3.5" ry="2.2" fill="#0f1660"/><ellipse cx="758.0" cy="961.5" rx="1.8" ry="3.3" fill="#0f1660"/><path d="M767.0 964.5 V975.5 M767.0 964.5 L762.0 969.5 M767.0 964.5 L758.0 961.5" stroke="#0f1660" stroke-width="1"/><circle cx="1018.5" cy="747.3" r="3" fill="#0f1660"/><ellipse cx="1024.0" cy="753.8" rx="3.5" ry="2.2" fill="#0f1660"/><ellipse cx="1014.5" cy="739.3" rx="1.8" ry="3.3" fill="#0f1660"/><path d="M1023.5 742.3 V753.3 M1023.5 742.3 L1018.5 747.3 M1023.5 742.3 L1014.5 739.3" stroke="#0f1660" stroke-width="1"/><circle cx="570.8" cy="621.2" r="3.2" fill="#0f1660"/><ellipse cx="565" cy="610.8" rx="2.5" ry="3.3" fill="#0f1660"/><path d="M549.5 640.5 L553.5 629 Q558 626 563 630.5 L563.5 636 Z" fill="#1e861e"/><path d="M553.5 629 Q558 626 563 630.5" stroke="#2aa02a" stroke-width="1" fill="none"/><path d="M613 631 L620 619.6 L629.7 628 Z" fill="#c0202a"/><path d="M578.6 616 V652" stroke="#7a5a8a" stroke-width="1.2"/><path d="M571.8 652 L585.4 652 L578.6 667.6 Z" fill="#6a3f8a"/><ellipse cx="578.6" cy="652" rx="6.8" ry="2.5" fill="#7a4aa0"/></svg><div style="position:absolute;left:653px;top:455px;width:24.799999999999955px;height:19.80000000000001px;background:#f2f2f2;"></div><div style="position:absolute;left:474.8px;top:573.3px;width:24.19999999999999px;height:18.100000000000023px;background:#f2f2f2;"></div><div style="position:absolute;left:499px;top:757.3px;width:24.399999999999977px;height:19.5px;background:#efe6e0;"></div><div style="position:absolute;left:868.7px;top:745.8px;width:23.299999999999955px;height:20.0px;background:#efe6e0;"></div><div style="position:absolute;left:845.7px;top:561.3px;width:24.299999999999955px;height:18.300000000000068px;background:#eeeeee;"></div><div style="position:absolute;left:652px;top:736.5px;width:24px;height:21.799999999999955px;background:#f3e6de;"></div>
<div style="position:absolute;left:111.70px;top:24.81px;font-size:30px;line-height:30px;font-weight:700;font-style:italic;color:#fff;white-space:pre;transform:scaleX(0.9379);transform-origin:0 0;">StatiCa</div><div style="position:absolute;left:212.00px;top:27.69px;font-size:11px;line-height:11px;font-weight:400;font-style:normal;color:#ddd;white-space:pre;transform:scaleX(1.1250);transform-origin:0 0;">®</div><div style="position:absolute;left:231.62px;top:33.87px;font-size:20px;line-height:20px;font-weight:400;font-style:normal;color:#e0e0e0;white-space:pre;transform:scaleX(0.8782);transform-origin:0 0;">DETAIL</div><div style="position:absolute;left:645.50px;top:9.01px;font-size:18px;line-height:18px;font-weight:400;font-style:normal;color:#e8e8e8;white-space:pre;transform:scaleX(0.9896);transform-origin:0 0;">Transfer from Connection 3D Anchoring_pictures.ideaDet</div><div style="position:absolute;left:519.99px;top:49.15px;font-size:20.5px;line-height:20.5px;font-weight:400;font-style:normal;color:#f0f0f0;white-space:pre;transform:scaleX(0.8061);transform-origin:0 0;">PROJECT</div><div style="position:absolute;left:648.30px;top:49.15px;font-size:20.5px;line-height:20.5px;font-weight:400;font-style:normal;color:#f36f21;white-space:pre;transform:scaleX(0.8998);transform-origin:0 0;">DESIGN</div><div style="position:absolute;left:769.46px;top:49.05px;font-size:20.5px;line-height:20.5px;font-weight:400;font-style:normal;color:#f0f0f0;white-space:pre;transform:scaleX(0.8440);transform-origin:0 0;">CHECK</div><div style="position:absolute;left:881.08px;top:49.05px;font-size:20.5px;line-height:20.5px;font-weight:400;font-style:normal;color:#f0f0f0;white-space:pre;transform:scaleX(0.8163);transform-origin:0 0;">REPORT</div><div style="position:absolute;left:1001.92px;top:49.05px;font-size:20.5px;line-height:20.5px;font-weight:400;font-style:normal;color:#f0f0f0;white-space:pre;transform:scaleX(0.8797);transform-origin:0 0;">MATERIALS</div><div style="position:absolute;left:1653.00px;top:51.05px;font-size:15px;line-height:15px;font-weight:400;font-style:normal;color:#a8a8a8;white-space:pre;transform:scaleX(0.9900);transform-origin:0 0;">Search on ideastatica.com</div><div style="position:absolute;left:0.15px;top:96.96px;font-size:16px;line-height:16px;font-weight:400;font-style:normal;color:#fff;white-space:pre;transform:scaleX(0.9488);transform-origin:0 0;">Detail1</div><div style="position:absolute;left:95.99px;top:133.90px;font-size:15px;line-height:15px;font-weight:400;font-style:normal;color:#333;white-space:pre;transform:scaleX(1.0146);transform-origin:0 0;">New</div><div style="position:absolute;left:141.30px;top:133.90px;font-size:15px;line-height:15px;font-weight:400;font-style:normal;color:#333;white-space:pre;transform:scaleX(0.9545);transform-origin:0 0;">Copy</div><div style="position:absolute;left:42.49px;top:185.60px;font-size:15px;line-height:15px;font-weight:400;font-style:normal;color:#333;white-space:pre;transform:scaleX(1.0095);transform-origin:0 0;">Project items</div><div style="position:absolute;left:190.99px;top:133.90px;font-size:15px;line-height:15px;font-weight:400;font-style:normal;color:#333;white-space:pre;transform:scaleX(1.0140);transform-origin:0 0;">Undo</div><div style="position:absolute;left:238.01px;top:133.90px;font-size:15px;line-height:15px;font-weight:400;font-style:normal;color:#c6c6c6;white-space:pre;transform:scaleX(0.9850);transform-origin:0 0;">Redo</div><div style="position:absolute;left:287.00px;top:133.90px;font-size:15px;line-height:15px;font-weight:400;font-style:normal;color:#333;white-space:pre;transform:scaleX(0.9100);transform-origin:0 0;">Save</div><div style="position:absolute;left:240.22px;top:185.60px;font-size:15px;line-height:15px;font-weight:400;font-style:normal;color:#333;white-space:pre;transform:scaleX(0.9827);transform-origin:0 0;">Data</div><div style="position:absolute;left:336.03px;top:132.80px;font-size:15px;line-height:15px;font-weight:400;font-style:normal;color:#333;white-space:pre;transform:scaleX(0.9675);transform-origin:0 0;">Edges</div><div style="position:absolute;left:333.82px;top:152.80px;font-size:15px;line-height:15px;font-weight:400;font-style:normal;color:#333;white-space:pre;transform:scaleX(0.9834);transform-origin:0 0;">names</div><div style="position:absolute;left:381.68px;top:132.80px;font-size:15px;line-height:15px;font-weight:400;font-style:normal;color:#333;white-space:pre;transform:scaleX(1.0170);transform-origin:0 0;">Dimension</div><div style="position:absolute;left:402.60px;top:152.80px;font-size:15px;line-height:15px;font-weight:400;font-style:normal;color:#333;white-space:pre;">lines</div><div style="position:absolute;left:372.84px;top:185.60px;font-size:15px;line-height:15px;font-weight:400;font-style:normal;color:#333;white-space:pre;transform:scaleX(0.9625);transform-origin:0 0;">Labels</div><div style="position:absolute;left:463.96px;top:132.10px;font-size:15px;line-height:15px;font-weight:400;font-style:normal;color:#333;white-space:pre;transform:scaleX(0.9391);transform-origin:0 0;">Rebars</div><div style="position:absolute;left:520.00px;top:132.10px;font-size:15px;line-height:15px;font-weight:400;font-style:normal;color:#333;white-space:pre;transform:scaleX(0.9645);transform-origin:0 0;">Grid</div><div style="position:absolute;left:490.78px;top:185.60px;font-size:15px;line-height:15px;font-weight:400;font-style:normal;color:#333;white-space:pre;transform:scaleX(1.0155);transform-origin:0 0;">Draw</div><div style="position:absolute;left:569.01px;top:133.90px;font-size:15px;line-height:15px;font-weight:400;font-style:normal;color:#333;white-space:pre;transform:scaleX(0.9872);transform-origin:0 0;">New</div><div style="position:absolute;left:610.40px;top:133.90px;font-size:15px;line-height:15px;font-weight:400;font-style:normal;color:#333;white-space:pre;transform:scaleX(0.9477);transform-origin:0 0;">Gallery</div><div style="position:absolute;left:583.73px;top:185.60px;font-size:15px;line-height:15px;font-weight:400;font-style:normal;color:#333;white-space:pre;transform:scaleX(0.9661);transform-origin:0 0;">Pictures</div><div style="position:absolute;left:667.00px;top:133.90px;font-size:15px;line-height:15px;font-weight:400;font-style:normal;color:#333;white-space:pre;transform:scaleX(0.9721);transform-origin:0 0;">Settings</div><div style="position:absolute;left:726.00px;top:133.90px;font-size:15px;line-height:15px;font-weight:400;font-style:normal;color:#c8c8c8;white-space:pre;transform:scaleX(0.9680);transform-origin:0 0;">Calculate</div><div style="position:absolute;left:690.40px;top:185.60px;font-size:15px;line-height:15px;font-weight:400;font-style:normal;color:#333;white-space:pre;">Calculation</div><div style="position:absolute;left:798.50px;top:133.90px;font-size:15px;line-height:15px;font-weight:400;font-style:normal;color:#333;white-space:pre;transform:scaleX(0.9602);transform-origin:0 0;">Create</div><div style="position:absolute;left:848.20px;top:133.90px;font-size:15px;line-height:15px;font-weight:400;font-style:normal;color:#333;white-space:pre;transform:scaleX(1.0099);transform-origin:0 0;">Apply</div><div style="position:absolute;left:922.98px;top:94.40px;font-size:15px;line-height:15px;font-weight:400;font-style:normal;color:#333;white-space:pre;transform:scaleX(1.0188);transform-origin:0 0;">Manager</div><div style="position:absolute;left:924.00px;top:124.90px;font-size:15px;line-height:15px;font-weight:400;font-style:normal;color:#333;white-space:pre;transform:scaleX(0.8982);transform-origin:0 0;">Save</div><div style="position:absolute;left:924.00px;top:154.90px;font-size:15px;line-height:15px;font-weight:400;font-style:normal;color:#333;white-space:pre;transform:scaleX(0.9766);transform-origin:0 0;">Open</div><div style="position:absolute;left:857.60px;top:185.60px;font-size:15px;line-height:15px;font-weight:400;font-style:normal;color:#333;white-space:pre;">Templates</div><div style="position:absolute;left:1331.79px;top:103.52px;font-size:19px;line-height:19px;font-weight:400;font-style:normal;color:#c8c8c8;white-space:pre;transform:scaleX(0.7144);transform-origin:0 0;">DXF</div><div style="position:absolute;left:994.94px;top:133.90px;font-size:15px;line-height:15px;font-weight:400;font-style:normal;color:#333;white-space:pre;transform:scaleX(1.0627);transform-origin:0 0;">Model</div><div style="position:absolute;left:1000.00px;top:153.90px;font-size:15px;line-height:15px;font-weight:400;font-style:normal;color:#333;white-space:pre;transform:scaleX(1.0123);transform-origin:0 0;">entity</div><div style="position:absolute;left:1044.90px;top:133.90px;font-size:15px;line-height:15px;font-weight:400;font-style:normal;color:#cbcbcb;white-space:pre;transform:scaleX(1.0148);transform-origin:0 0;">Operation</div><div style="position:absolute;left:1120.79px;top:133.90px;font-size:15px;line-height:15px;font-weight:400;font-style:normal;color:#333;white-space:pre;transform:scaleX(1.0054);transform-origin:0 0;">Load</div><div style="position:absolute;left:1124.60px;top:153.90px;font-size:15px;line-height:15px;font-weight:400;font-style:normal;color:#333;white-space:pre;transform:scaleX(0.9125);transform-origin:0 0;">case</div><div style="position:absolute;left:1164.20px;top:133.90px;font-size:15px;line-height:15px;font-weight:400;font-style:normal;color:#333;white-space:pre;transform:scaleX(1.0278);transform-origin:0 0;">Combination</div><div style="position:absolute;left:1267.42px;top:133.90px;font-size:15px;line-height:15px;font-weight:400;font-style:normal;color:#333;white-space:pre;transform:scaleX(0.9759);transform-origin:0 0;">Rebar</div><div style="position:absolute;left:1257.60px;top:153.90px;font-size:15px;line-height:15px;font-weight:400;font-style:normal;color:#333;white-space:pre;transform:scaleX(0.9569);transform-origin:0 0;">assembly</div><div style="position:absolute;left:1333.41px;top:133.90px;font-size:15px;line-height:15px;font-weight:400;font-style:normal;color:#cbcbcb;white-space:pre;transform:scaleX(0.8912);transform-origin:0 0;">DXF</div><div style="position:absolute;left:1324.24px;top:153.90px;font-size:15px;line-height:15px;font-weight:400;font-style:normal;color:#cbcbcb;white-space:pre;transform:scaleX(1.0604);transform-origin:0 0;">Import</div><div style="position:absolute;left:1166.99px;top:185.60px;font-size:15px;line-height:15px;font-weight:400;font-style:normal;color:#333;white-space:pre;transform:scaleX(1.0111);transform-origin:0 0;">New</div><div style="position:absolute;left:-1.99px;top:1123.60px;font-size:15px;line-height:15px;font-weight:400;font-style:normal;color:#e6e6e6;white-space:pre;transform:scaleX(0.9908);transform-origin:0 0;">Design Code:</div><div style="position:absolute;left:90.21px;top:1123.60px;font-size:15px;line-height:15px;font-weight:700;font-style:normal;color:#fff;white-space:pre;transform:scaleX(0.9892);transform-origin:0 0;">EN</div><div style="position:absolute;left:130.70px;top:1123.60px;font-size:15px;line-height:15px;font-weight:400;font-style:normal;color:#e6e6e6;white-space:pre;">Rounding:</div><div style="position:absolute;left:200.58px;top:1123.60px;font-size:15px;line-height:15px;font-weight:700;font-style:normal;color:#fff;white-space:pre;transform:scaleX(1.0155);transform-origin:0 0;">Metric</div><div style="position:absolute;left:265.03px;top:1123.60px;font-size:15px;line-height:15px;font-weight:400;font-style:normal;color:#e6e6e6;white-space:pre;transform:scaleX(0.9730);transform-origin:0 0;">Presentation Units:</div><div style="position:absolute;left:391.28px;top:1123.60px;font-size:15px;line-height:15px;font-weight:700;font-style:normal;color:#fff;white-space:pre;transform:scaleX(1.0248);transform-origin:0 0;">Metric</div><div style="position:absolute;left:1.49px;top:247.30px;font-size:15px;line-height:15px;font-weight:700;font-style:normal;color:#111;white-space:pre;transform:scaleX(1.0129);transform-origin:0 0;">Nonconformities:</div><div style="position:absolute;left:33.98px;top:269.80px;font-size:15px;line-height:15px;font-weight:400;font-style:normal;color:#333;white-space:pre;transform:scaleX(1.0218);transform-origin:0 0;">No reinforcement is defined in the model...</div><div style="position:absolute;left:52.50px;top:986.41px;font-size:17px;line-height:17px;font-weight:400;font-style:normal;color:#111;white-space:pre;">Z</div><div style="position:absolute;left:75.50px;top:1006.41px;font-size:17px;line-height:17px;font-weight:400;font-style:normal;color:#111;white-space:pre;transform:scaleX(0.9545);transform-origin:0 0;">Y</div><div style="position:absolute;left:92.50px;top:1037.81px;font-size:17px;line-height:17px;font-weight:400;font-style:normal;color:#111;white-space:pre;transform:scaleX(1.0455);transform-origin:0 0;">X</div><div style="position:absolute;left:1135.98px;top:371.80px;font-size:15px;line-height:15px;font-weight:700;font-style:normal;color:#333;white-space:pre;transform:scaleX(1.0189);transform-origin:0 0;">Detail1</div><div style="position:absolute;left:1161.97px;top:400.18px;font-size:15px;line-height:15px;font-weight:700;font-style:normal;color:#333;white-space:pre;transform:scaleX(1.0269);transform-origin:0 0;">Members</div><div style="position:absolute;left:1163.00px;top:428.56px;font-size:15px;line-height:15px;font-weight:400;font-style:normal;color:#666;white-space:pre;transform:scaleX(0.8605);transform-origin:0 0;">CB 1</div><div style="position:absolute;left:1163.00px;top:456.94px;font-size:15px;line-height:15px;font-weight:700;font-style:normal;color:#333;white-space:pre;transform:scaleX(0.9864);transform-origin:0 0;">Supports</div><div style="position:absolute;left:1163.00px;top:484.62px;font-size:15px;line-height:15px;font-weight:400;font-style:normal;color:#fff;white-space:pre;transform:scaleX(0.7854);transform-origin:0 0;">SS1</div><div style="position:absolute;left:1163.00px;top:513.70px;font-size:15px;line-height:15px;font-weight:700;font-style:normal;color:#333;white-space:pre;transform:scaleX(0.9656);transform-origin:0 0;">Transfer devices</div><div style="position:absolute;left:1162.14px;top:542.08px;font-size:15px;line-height:15px;font-weight:400;font-style:normal;color:#666;white-space:pre;transform:scaleX(0.8552);transform-origin:0 0;">BP1</div><div style="position:absolute;left:1163.00px;top:570.46px;font-size:15px;line-height:15px;font-weight:400;font-style:normal;color:#666;white-space:pre;transform:scaleX(0.9502);transform-origin:0 0;">AN1</div><div style="position:absolute;left:1163.00px;top:598.84px;font-size:15px;line-height:15px;font-weight:400;font-style:normal;color:#666;white-space:pre;transform:scaleX(0.9918);transform-origin:0 0;">AN2</div><div style="position:absolute;left:1163.00px;top:627.22px;font-size:15px;line-height:15px;font-weight:400;font-style:normal;color:#666;white-space:pre;transform:scaleX(0.9848);transform-origin:0 0;">AN3</div><div style="position:absolute;left:1163.00px;top:655.60px;font-size:15px;line-height:15px;font-weight:400;font-style:normal;color:#666;white-space:pre;transform:scaleX(1.0056);transform-origin:0 0;">AN4</div><div style="position:absolute;left:1162.01px;top:683.98px;font-size:15px;line-height:15px;font-weight:700;font-style:normal;color:#333;white-space:pre;transform:scaleX(0.9861);transform-origin:0 0;">Loads and Combin...</div><div style="position:absolute;left:1188.67px;top:712.36px;font-size:15px;line-height:15px;font-weight:700;font-style:normal;color:#333;white-space:pre;transform:scaleX(0.9295);transform-origin:0 0;">Load cases</div><div style="position:absolute;left:1188.79px;top:740.74px;font-size:15px;line-height:15px;font-weight:400;font-style:normal;color:#666;white-space:pre;transform:scaleX(0.8127);transform-origin:0 0;">LE1</div><div style="position:absolute;left:1189.60px;top:769.12px;font-size:15px;line-height:15px;font-weight:700;font-style:normal;color:#333;white-space:pre;transform:scaleX(0.9677);transform-origin:0 0;">ULS Combinations</div><div style="position:absolute;left:1216.76px;top:799.50px;font-size:15px;line-height:15px;font-weight:400;font-style:normal;color:#666;white-space:pre;transform:scaleX(0.8403);transform-origin:0 0;">LE1</div><div style="position:absolute;left:1365.10px;top:215.20px;font-size:15px;line-height:15px;font-weight:700;font-style:normal;color:#fff;white-space:pre;transform:scaleX(0.8533);transform-origin:0 0;">SS1</div><div style="position:absolute;left:1403.36px;top:215.20px;font-size:15px;line-height:15px;font-weight:400;font-style:normal;color:#fde3cf;white-space:pre;transform:scaleX(1.0368);transform-origin:0 0;">[Support]</div><div style="position:absolute;left:1738.78px;top:215.30px;font-size:15px;line-height:15px;font-weight:700;font-style:normal;color:#fff;white-space:pre;transform:scaleX(1.0174);transform-origin:0 0;">New</div><div style="position:absolute;left:1797.60px;top:215.30px;font-size:15px;line-height:15px;font-weight:700;font-style:normal;color:#fff;white-space:pre;transform:scaleX(0.9146);transform-origin:0 0;">Copy</div><div style="position:absolute;left:1857.99px;top:215.30px;font-size:15px;line-height:15px;font-weight:700;font-style:normal;color:#fff;white-space:pre;transform:scaleX(1.0142);transform-origin:0 0;">Delete</div><div style="position:absolute;left:1396.80px;top:257.50px;font-size:15px;line-height:15px;font-weight:700;font-style:normal;color:#333;white-space:pre;transform:scaleX(0.9720);transform-origin:0 0;">Surface support</div><div style="position:absolute;left:1396.56px;top:291.00px;font-size:15px;line-height:15px;font-weight:400;font-style:normal;color:#555;white-space:pre;transform:scaleX(1.0442);transform-origin:0 0;">Direction</div><div style="position:absolute;left:1525.02px;top:289.10px;font-size:15px;line-height:15px;font-weight:400;font-style:normal;color:#555;white-space:pre;transform:scaleX(0.9847);transform-origin:0 0;">Local</div><div style="position:absolute;left:1578.90px;top:289.10px;font-size:15px;line-height:15px;font-weight:400;font-style:normal;color:#555;white-space:pre;transform:scaleX(1.0180);transform-origin:0 0;">Global</div><div style="position:absolute;left:1396.90px;top:319.20px;font-size:15px;line-height:15px;font-weight:400;font-style:normal;color:#555;white-space:pre;transform:scaleX(0.8700);transform-origin:0 0;">X</div><div style="position:absolute;left:1812.84px;top:317.90px;font-size:15px;line-height:15px;font-weight:400;font-style:normal;color:#555;white-space:pre;transform:scaleX(1.1560);transform-origin:0 0;">MN/mm/mm²</div><div style="position:absolute;left:1396.90px;top:349.50px;font-size:15px;line-height:15px;font-weight:400;font-style:normal;color:#555;white-space:pre;transform:scaleX(0.8700);transform-origin:0 0;">Y</div><div style="position:absolute;left:1812.84px;top:348.20px;font-size:15px;line-height:15px;font-weight:400;font-style:normal;color:#555;white-space:pre;transform:scaleX(1.1560);transform-origin:0 0;">MN/mm/mm²</div><div style="position:absolute;left:1396.90px;top:379.80px;font-size:15px;line-height:15px;font-weight:400;font-style:normal;color:#555;white-space:pre;transform:scaleX(0.9667);transform-origin:0 0;">Z</div><div style="position:absolute;left:1812.84px;top:378.50px;font-size:15px;line-height:15px;font-weight:400;font-style:normal;color:#555;white-space:pre;transform:scaleX(1.1560);transform-origin:0 0;">MN/mm/mm²</div><div style="position:absolute;left:1573.00px;top:319.20px;font-size:15px;line-height:15px;font-weight:400;font-style:normal;color:#111;white-space:pre;transform:scaleX(0.9500);transform-origin:0 0;">8</div><div style="position:absolute;left:1573.00px;top:349.50px;font-size:15px;line-height:15px;font-weight:400;font-style:normal;color:#111;white-space:pre;transform:scaleX(0.9500);transform-origin:0 0;">8</div><div style="position:absolute;left:1573.00px;top:379.80px;font-size:15px;line-height:15px;font-weight:400;font-style:normal;color:#111;white-space:pre;transform:scaleX(0.9179);transform-origin:0 0;">40</div><div style="position:absolute;left:1395.92px;top:424.60px;font-size:15px;line-height:15px;font-weight:700;font-style:normal;color:#333;white-space:pre;transform:scaleX(0.9827);transform-origin:0 0;">Position</div><div style="position:absolute;left:1395.89px;top:455.80px;font-size:15px;line-height:15px;font-weight:400;font-style:normal;color:#555;white-space:pre;transform:scaleX(1.0056);transform-origin:0 0;">Master</div><div style="position:absolute;left:1396.90px;top:516.50px;font-size:15px;line-height:15px;font-weight:400;font-style:normal;color:#555;white-space:pre;">Geometry type</div><div style="position:absolute;left:1522.00px;top:455.60px;font-size:15px;line-height:15px;font-weight:400;font-style:normal;color:#111;white-space:pre;transform:scaleX(0.9090);transform-origin:0 0;">CB 1</div><div style="position:absolute;left:1522.00px;top:486.30px;font-size:15px;line-height:15px;font-weight:400;font-style:normal;color:#111;white-space:pre;transform:scaleX(0.8125);transform-origin:0 0;">5</div><div style="position:absolute;left:1522.00px;top:517.00px;font-size:15px;line-height:15px;font-weight:400;font-style:normal;color:#111;white-space:pre;transform:scaleX(0.9944);transform-origin:0 0;">Whole surface</div><div style="position:absolute;left:1634.65px;top:972.38px;font-size:22px;line-height:22px;font-weight:700;font-style:normal;color:#c4c4c4;white-space:pre;transform:scaleX(1.0500);transform-origin:0 0;">?</div><div style="position:absolute;left:1396.90px;top:486.00px;font-size:15px;line-height:15px;font-weight:400;font-style:normal;color:#555;white-space:pre;transform:scaleX(0.9484);transform-origin:0 0;">Surface</div><div style="position:absolute;left:653.85px;top:456.80px;font-size:15px;line-height:15px;font-weight:400;font-style:normal;color:#222;white-space:pre;transform:scaleX(1.1477);transform-origin:0 0;">[6]</div><div style="position:absolute;left:475.69px;top:575.10px;font-size:15px;line-height:15px;font-weight:400;font-style:normal;color:#222;white-space:pre;transform:scaleX(1.1090);transform-origin:0 0;">[1]</div><div style="position:absolute;left:499.88px;top:759.10px;font-size:15px;line-height:15px;font-weight:400;font-style:normal;color:#222;white-space:pre;transform:scaleX(1.1219);transform-origin:0 0;">[2]</div><div style="position:absolute;left:869.65px;top:747.60px;font-size:15px;line-height:15px;font-weight:400;font-style:normal;color:#222;white-space:pre;transform:scaleX(1.0510);transform-origin:0 0;">[3]</div><div style="position:absolute;left:846.58px;top:563.10px;font-size:15px;line-height:15px;font-weight:400;font-style:normal;color:#222;white-space:pre;transform:scaleX(1.1154);transform-origin:0 0;">[4]</div><div style="position:absolute;left:652.90px;top:738.30px;font-size:15px;line-height:15px;font-weight:400;font-style:normal;color:#f07a3a;white-space:pre;transform:scaleX(1.0961);transform-origin:0 0;">[5]</div>
<svg style="position:absolute;left:0px;top:0px;overflow:visible;" width="1920" height="1150" viewBox="0 0 1920 1150">
<rect x="1565.6" y="312.5" width="30.6" height="93.1" rx="6" fill="none" stroke="#ff2a2a" stroke-width="5"/>
<rect x="1540.5" y="372.5" width="18.9" height="32.5" rx="6" fill="none" stroke="#ff2a2a" stroke-width="5"/>
<rect x="1787.5" y="313" width="31.5" height="92.2" rx="6" fill="none" stroke="#ff2a2a" stroke-width="5"/>
<path d="M1550.2 410 V614" stroke="#ff2a2a" stroke-width="4.2"/>
<path d="M1543.5 419.5 L1550.2 410.5 L1556.9 419.5" fill="none" stroke="#ff2a2a" stroke-width="4.2" stroke-linecap="round"/>
<rect x="1399" y="616.9" width="302.5" height="91.3" rx="5" fill="#fff" stroke="#ff2a2a" stroke-width="4.5"/>
</svg>
<div style="position:absolute;left:1573.60px;top:245.02px;font-size:34px;line-height:34px;font-weight:700;font-style:normal;color:#ff2a2a;white-space:pre;transform:scaleX(0.8778);transform-origin:0 0;">3</div><div style="position:absolute;left:1794.45px;top:265.62px;font-size:34px;line-height:34px;font-weight:700;font-style:normal;color:#ff2a2a;white-space:pre;transform:scaleX(0.9529);transform-origin:0 0;">2</div><div style="position:absolute;left:1518.79px;top:398.32px;font-size:34px;line-height:34px;font-weight:700;font-style:normal;color:#ff2a2a;white-space:pre;transform:scaleX(0.9562);transform-origin:0 0;">1</div><div style="position:absolute;left:1425.98px;top:632.14px;font-size:27px;line-height:27px;font-weight:700;font-style:normal;color:#f07024;white-space:pre;transform:scaleX(1.0203);transform-origin:0 0;">Inactive in tension</div><div style="position:absolute;left:1494.55px;top:669.64px;font-size:27px;line-height:27px;font-weight:700;font-style:normal;color:#f07024;white-space:pre;transform:scaleX(1.0498);transform-origin:0 0;">(default)</div>
</div></body></html>
